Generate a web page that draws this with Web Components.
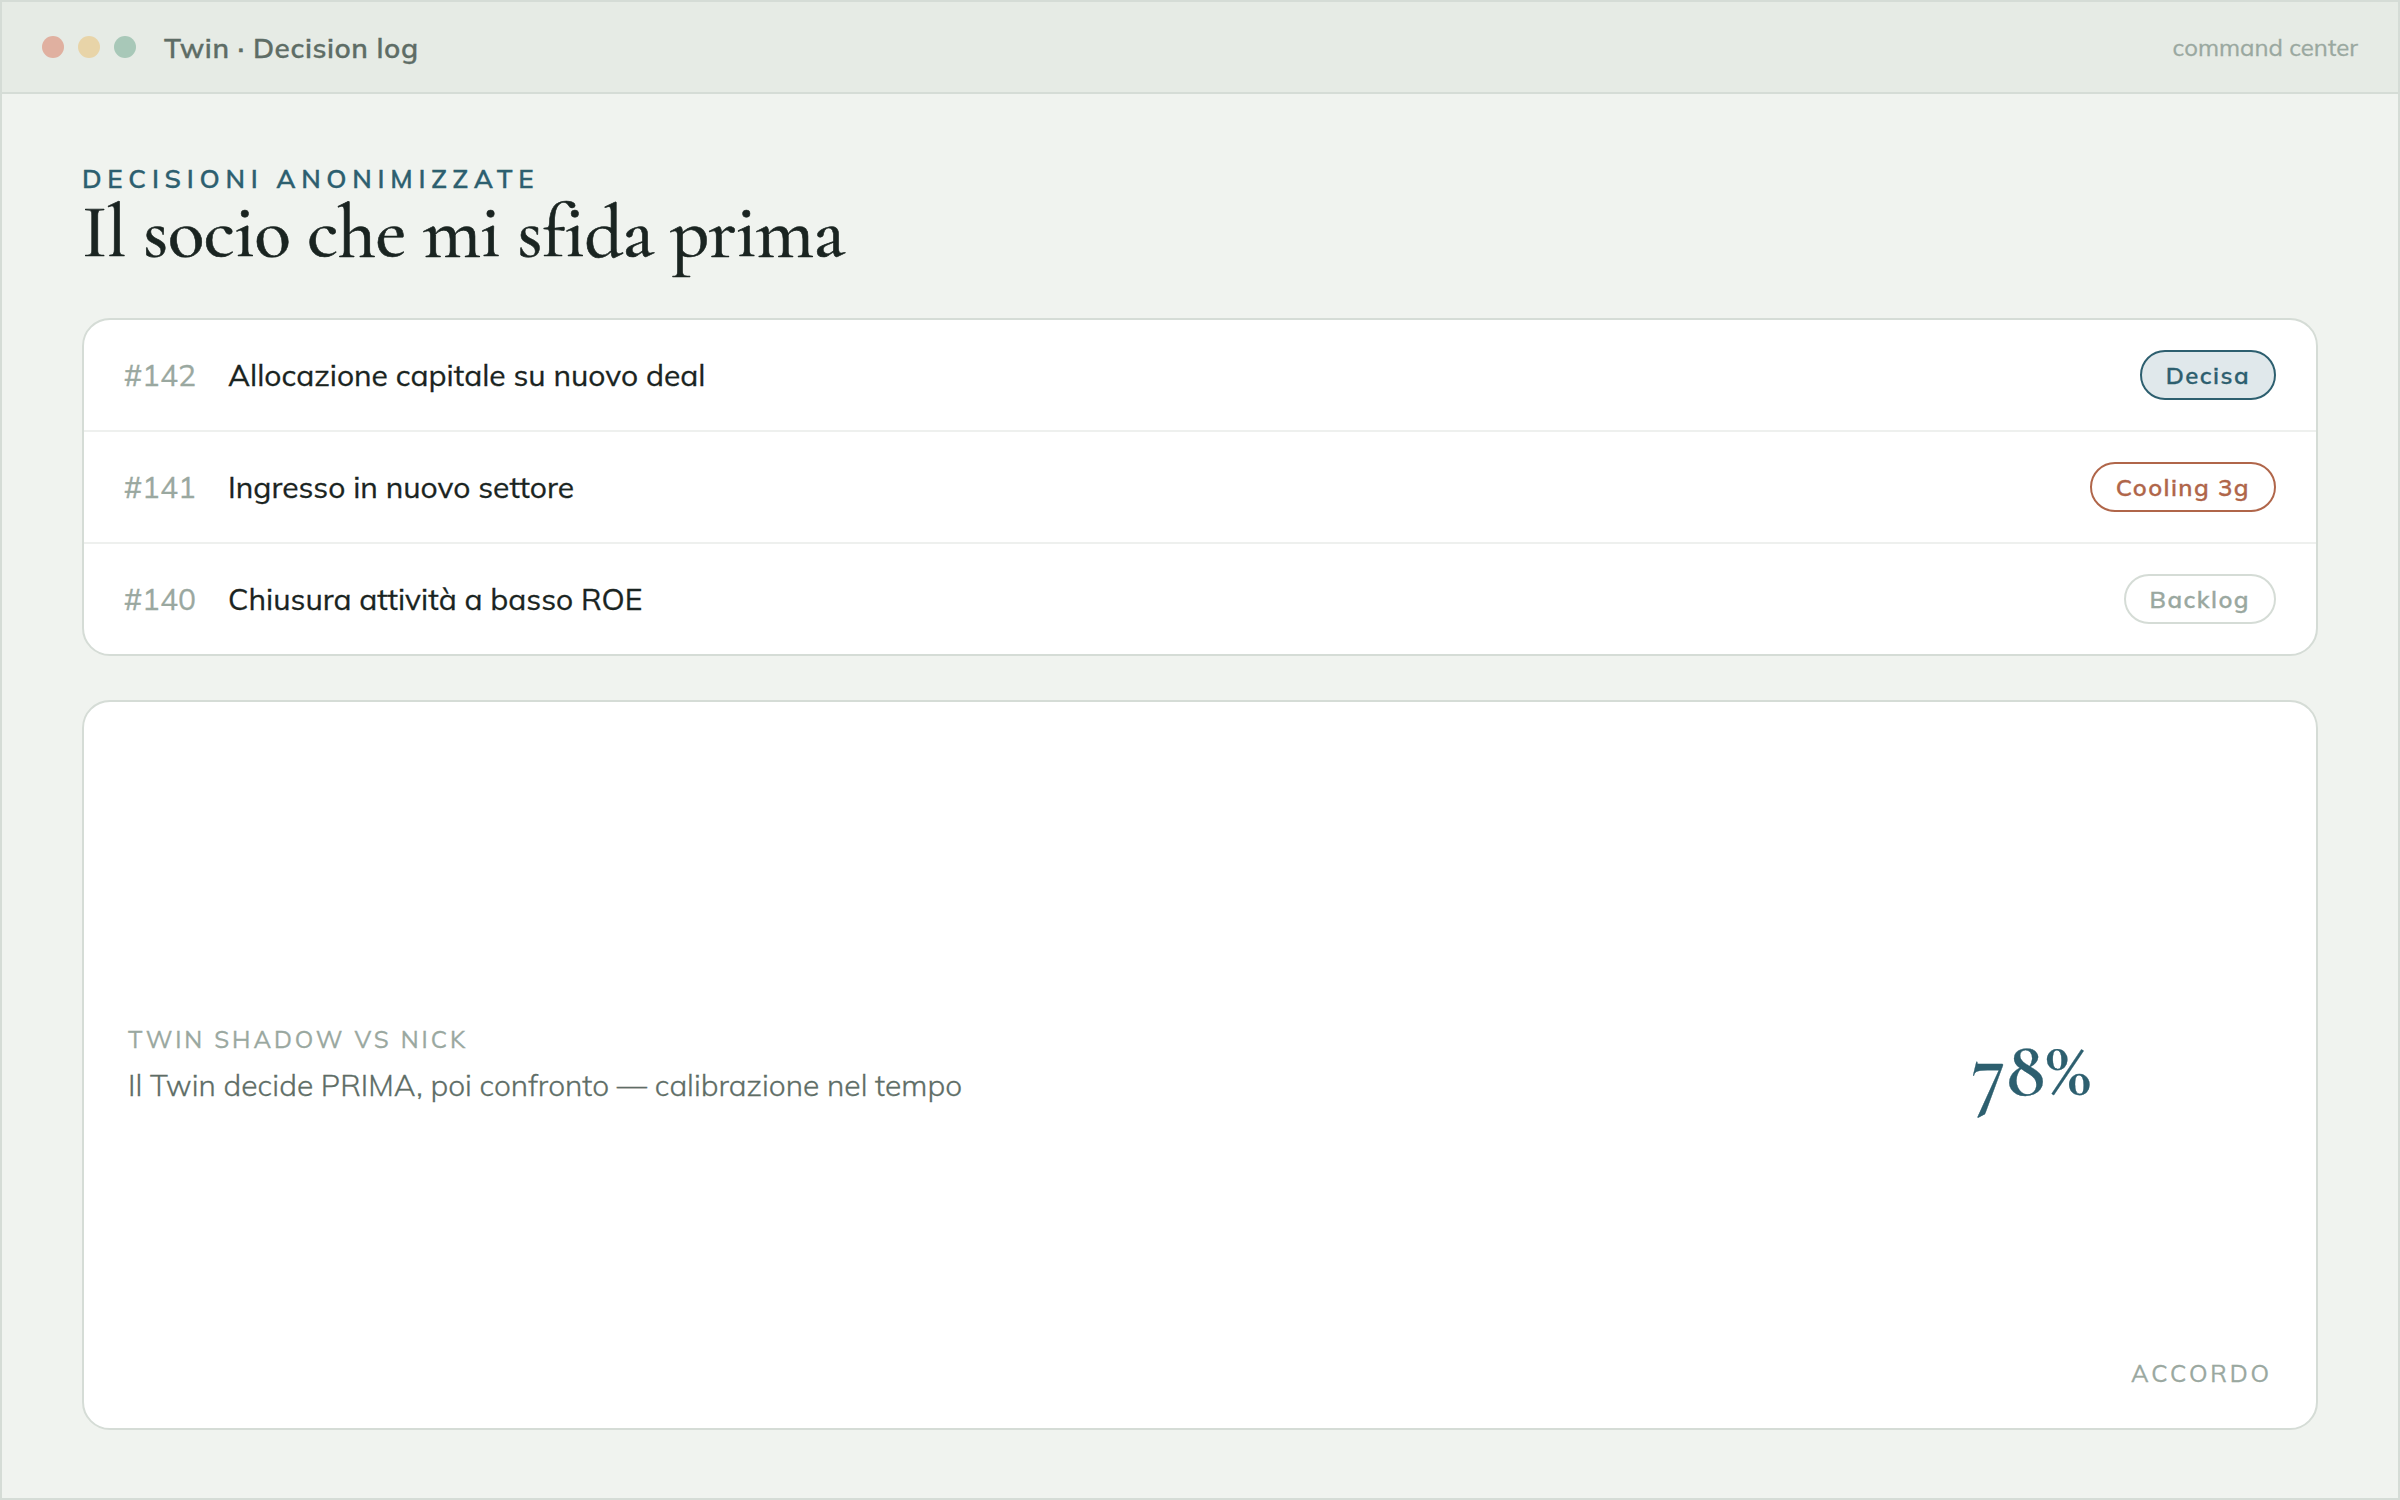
<!DOCTYPE html>
<html lang="it">
<head>
<meta charset="utf-8">
<title>Twin · Decision log</title>
<style>
    :root {
        --bg: #f0f3ef;
        --bar: #e6ebe5;
        --line: #d5dcd6;
        --ink: #1a2421;
        --muted: #5e6d66;
        --faint: #9aa8a0;
        --teal: #2d5f6f;
        --rust: #b0664a;
        --serif: "Cormorant Garamond", "Liberation Serif", serif;
    }

    body {
        margin: 0;
        color: var(--ink);
        font-family: Mulish, "Open Sans", sans-serif;
        -webkit-text-stroke-width: 0.3px;
    }
</style>
</head>
<body>
<app-window heading="Twin · Decision log" note="command center">
    <page-heading eyebrow="DECISIONI ANONIMIZZATE">Il socio che mi sfida prima</page-heading>
    <decision-list>
        <decision-row number="142" status="Decisa" tone="done">Allocazione capitale su nuovo deal</decision-row>
        <decision-row number="141" status="Cooling 3g" tone="cooling">Ingresso in nuovo settore</decision-row>
        <decision-row number="140" status="Backlog" tone="backlog">Chiusura attività a basso ROE</decision-row>
    </decision-list>
    <agreement-card label="TWIN SHADOW VS NICK" value="78%" caption="ACCORDO">Il Twin decide PRIMA, poi confronto — calibrazione nel tempo</agreement-card>
</app-window>

<script>
class AppWindow extends HTMLElement {
    constructor() {
        super();
        this.attachShadow({ mode: 'open' });
    }

    connectedCallback() {
        this.shadowRoot.innerHTML = `
            <style>
                :host {
                    display: flex;
                    flex-direction: column;
                    box-sizing: border-box;
                    height: 100vh;
                    border: 2px solid var(--line);
                    background: var(--bg);
                }
                header {
                    display: flex;
                    align-items: center;
                    box-sizing: border-box;
                    height: 92px;
                    padding: 0 40px;
                    background: var(--bar);
                    border-bottom: 2px solid var(--line);
                }
                .dots {
                    display: flex;
                    gap: 14px;
                    margin-right: 28px;
                }
                .dots i {
                    width: 22px;
                    height: 22px;
                    border-radius: 50%;
                }
                .dots i:nth-child(1) { background: #e0b0a0; }
                .dots i:nth-child(2) { background: #e8d4a8; }
                .dots i:nth-child(3) { background: #a8c8b8; }
                .heading {
                    font-size: 28px;
                    font-weight: 600;
                    letter-spacing: 0.02em;
                    color: var(--muted);
                }
                .note {
                    margin-left: auto;
                    font-size: 24px;
                    color: var(--faint);
                }
                main {
                    flex: 1;
                    display: flex;
                    flex-direction: column;
                    padding: 68px 80px;
                }
            </style>
            <header>
                <div class="dots"><i></i><i></i><i></i></div>
                <span class="heading">${this.getAttribute('heading')}</span>
                <span class="note">${this.getAttribute('note')}</span>
            </header>
            <main><slot></slot></main>
        `;
    }
}

class PageHeading extends HTMLElement {
    constructor() {
        super();
        this.attachShadow({ mode: 'open' });
    }

    connectedCallback() {
        this.shadowRoot.innerHTML = `
            <style>
                :host {
                    display: block;
                    margin-bottom: 48px;
                }
                .eyebrow {
                    margin-bottom: -2px;
                    font-size: 26px;
                    line-height: 34px;
                    font-weight: 600;
                    letter-spacing: 0.22em;
                    color: var(--teal);
                }
                h1 {
                    margin: 0;
                    font: 500 76px/1 var(--serif);
                    letter-spacing: -0.01em;
                    -webkit-text-stroke-width: 0.6px;
                }
            </style>
            <div class="eyebrow">${this.getAttribute('eyebrow')}</div>
            <h1><slot></slot></h1>
        `;
    }
}

class DecisionList extends HTMLElement {
    constructor() {
        super();
        this.attachShadow({ mode: 'open' });
    }

    connectedCallback() {
        this.shadowRoot.innerHTML = `
            <style>
                :host {
                    display: block;
                    margin-bottom: 44px;
                    background: #fff;
                    border: 2px solid var(--line);
                    border-radius: 28px;
                    overflow: hidden;
                }
                ::slotted(:not(:last-child)) {
                    border-bottom: 2px solid #eef0ee;
                }
            </style>
            <slot></slot>
        `;
    }
}

class DecisionRow extends HTMLElement {
    constructor() {
        super();
        this.attachShadow({ mode: 'open' });
    }

    connectedCallback() {
        this.shadowRoot.innerHTML = `
            <style>
                :host {
                    display: flex;
                    align-items: center;
                    gap: 32px;
                    padding: 30px 40px;
                    font-size: 30px;
                }
                .number { color: var(--faint); }
                .title { flex: 1; }
            </style>
            <span class="number">#${this.getAttribute('number')}</span>
            <span class="title"><slot></slot></span>
            <status-pill tone="${this.getAttribute('tone')}">${this.getAttribute('status')}</status-pill>
        `;
    }
}

class StatusPill extends HTMLElement {
    constructor() {
        super();
        this.attachShadow({ mode: 'open' });
    }

    connectedCallback() {
        const [color, border, background] = this.getColors(this.getAttribute('tone'));
        this.shadowRoot.innerHTML = `
            <style>
                :host {
                    display: block;
                    padding: 8px 24px;
                    border: 2px solid ${border};
                    border-radius: 28px;
                    background: ${background};
                    color: ${color};
                    font-size: 24px;
                    line-height: 30px;
                    font-weight: 600;
                    letter-spacing: 0.06em;
                }
            </style>
            <slot></slot>
        `;
    }

    getColors(tone) {
        if (tone === 'done') return ['var(--teal)', 'var(--teal)', '#e0e8eb'];
        if (tone === 'cooling') return ['var(--rust)', 'var(--rust)', 'transparent'];
        return ['var(--faint)', 'var(--line)', 'transparent'];
    }
}

class AgreementCard extends HTMLElement {
    constructor() {
        super();
        this.attachShadow({ mode: 'open' });
    }

    connectedCallback() {
        this.shadowRoot.innerHTML = `
            <style>
                :host {
                    flex: 1;
                    display: flex;
                    align-items: center;
                    gap: 40px;
                    padding: 40px 44px;
                    background: #fff;
                    border: 2px solid var(--line);
                    border-radius: 28px;
                }
                .text {
                    flex: 1;
                    padding-bottom: 2px;
                }
                .label, .caption {
                    font-size: 24px;
                    line-height: 30px;
                    letter-spacing: 0.12em;
                    color: var(--faint);
                }
                .body {
                    margin-top: 12px;
                    font-size: 30px;
                    font-weight: 300;
                    color: var(--muted);
                }
                .value {
                    margin-top: 10px;
                    font: 600 80px/1 var(--serif);
                    color: var(--teal);
                }
                .caption { align-self: flex-end; }
            </style>
            <div class="text">
                <div class="label">${this.getAttribute('label')}</div>
                <div class="body"><slot></slot></div>
            </div>
            <div class="value">${this.getAttribute('value')}</div>
            <div class="caption">${this.getAttribute('caption')}</div>
        `;
    }
}

customElements.define('app-window', AppWindow);
customElements.define('page-heading', PageHeading);
customElements.define('decision-list', DecisionList);
customElements.define('decision-row', DecisionRow);
customElements.define('status-pill', StatusPill);
customElements.define('agreement-card', AgreementCard);
</script>
</body>
</html>
